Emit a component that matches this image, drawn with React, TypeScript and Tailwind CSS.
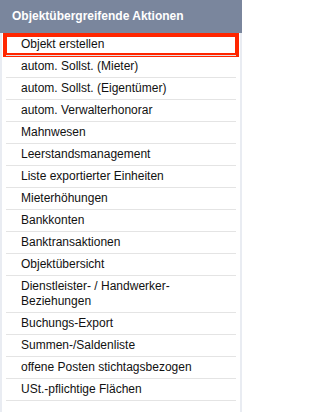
import React from "react";

const items: React.ReactNode[] = [
  "Objekt erstellen",
  "autom. Sollst. (Mieter)",
  "autom. Sollst. (Eigentümer)",
  "autom. Verwalterhonorar",
  "Mahnwesen",
  "Leerstandsmanagement",
  "Liste exportierter Einheiten",
  "Mieterhöhungen",
  "Bankkonten",
  "Banktransaktionen",
  "Objektübersicht",
  <>
    Dienstleister- / Handwerker-
    <br />
    Beziehungen
  </>,
  "Buchungs-Export",
  "Summen-/Saldenliste",
  "offene Posten stichtagsbezogen",
  "USt.-pflichtige Flächen",
];

export default function App() {
  return (
    <div
      className="w-[242px] h-[412px] flex flex-col bg-[#e9ecf2] overflow-hidden"
      style={{ fontFamily: '"Liberation Sans", Arial, sans-serif' }}
    >
      <div className="h-[33px] shrink-0 bg-[#7a869d] pl-[12px] pt-[9px] text-[12px] leading-[15px] font-bold text-white">
        Objektübergreifende Aktionen
      </div>
      <div className="flex-1 mx-[2px] bg-white">
        <ul className="mx-[4px] border-b border-[#e4e4e4]">
          {items.map((it, i) => (
            <li
              key={i}
              className="relative border-t border-[#e4e4e4] pl-[15px] pt-[3px] pb-[3px] text-[12px] leading-[15px] text-[#111]"
            >
              {it}
              {i === 0 && (
                <span className="absolute left-[-3px] right-[-3px] top-[-1px] bottom-[-2px] border-[4px] border-[#ff2600] pointer-events-none" />
              )}
            </li>
          ))}
        </ul>
      </div>
    </div>
  );
}
